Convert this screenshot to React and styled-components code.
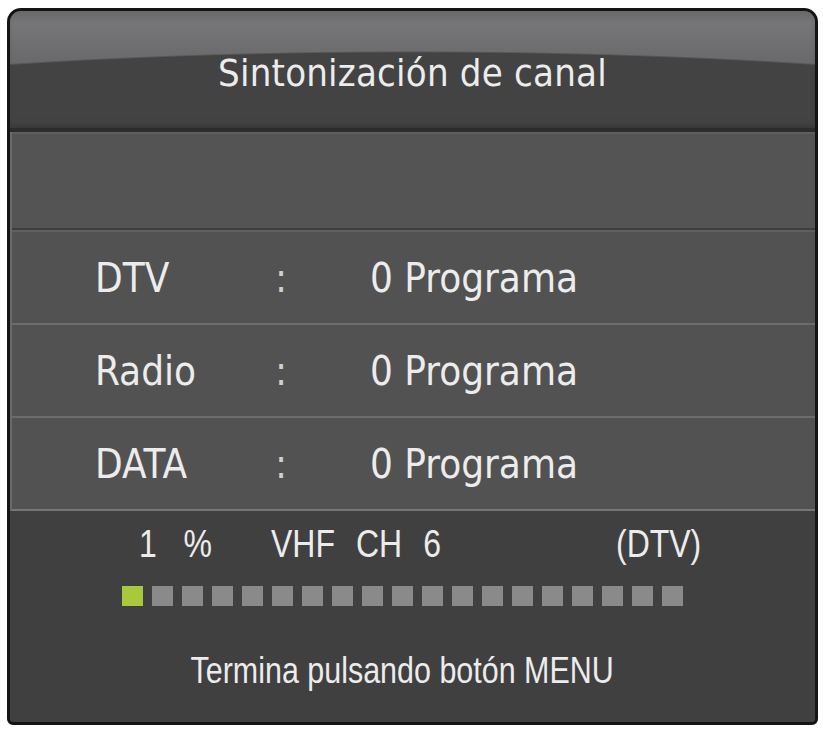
import React from 'react';
import styled, { createGlobalStyle } from 'styled-components';

const GlobalStyle = createGlobalStyle`
  html, body {
    margin: 0;
    padding: 0;
    background: #ffffff;
  }
`

const Page = styled.div`
  padding: 8px 5px 4px 7px;
`

const Frame = styled.div`
  width: 811px;
  height: 717px;
  box-sizing: border-box;
  border: 3px solid #141414;
  border-radius: 14px 14px 6px 6px;
  overflow: hidden;
  display: flex;
  flex-direction: column;
  background: #404040;
  color: #ececec;
  font-family: "DejaVu Sans Condensed", "DejaVu Sans", sans-serif;
  font-stretch: condensed;
`

const Header = styled.div`
  height: 121px;
  flex: none;
  display: flex;
  align-items: center;
  justify-content: center;
  padding-top: 6px;
  box-sizing: border-box;
  background:
    radial-gradient(900px 118px at 50% 158px, #434343 98.5%, transparent 100%),
    linear-gradient(#68686a 0px, #767678 12px, #6d6d6f 40px, #666668 62px);
  border-bottom: 4px solid #2c2c2c;
  box-shadow: inset 0 -6px 6px -4px #363636;
`

const Title = styled.div`
  font-size: 38px;
  letter-spacing: 0.2px;
`

const Body = styled.div`
  display: flex;
  flex-direction: column;
  border-left: 2px solid #6a6a6a;
`

const Blank = styled.div`
  height: 94px;
  background: #545454;
  border-top: 2px solid #5f5f5f;
  border-bottom: 2px solid #3e3e3e;
`

const Row = styled.div`
  height: 91px;
  display: grid;
  grid-template-columns: 180px 95px 1fr;
  align-items: center;
  padding-left: 83px;
  font-size: 40px;
  background: #525252;
  border-top: 2px solid ${props => props.first ? '#606060' : '#6c6c6c'};
  &:last-child {
    border-bottom: 2px solid #767676;
  }
`

const Colon = styled.span`
  color: #cfcfcf;
`

const Footer = styled.div`
  flex: 1;
  display: flex;
  flex-direction: column;
  align-items: center;
  font-family: "Liberation Sans", Arial, sans-serif;
`

// the OSD uses a narrow face; squeeze Liberation Sans to its width
const Narrow = styled.span`
  display: inline-block;
  white-space: pre;
  word-spacing: ${props => props.spread || 0}px;
  transform: scaleX(${props => props.squeeze || 0.82});
  transform-origin: ${props => props.centered ? 'center' : 'left'} center;
`

const Status = styled.div`
  width: 100%;
  display: flex;
  align-items: center;
  height: 66px;
  padding-left: 129px;
  box-sizing: border-box;
  font-size: 39px;
`

const Field = styled.span`
  flex: none;
  width: ${props => props.w}px;
`

const Bar = styled.div`
  display: flex;
  gap: 9px;
  margin-top: 9px;
  margin-left: -20px;
`

const Cell = styled.div`
  width: 21px;
  height: 20px;
  background: ${props => props.on ? '#a9c83c' : '#8a8a8a'};
`

const Hint = styled.div`
  margin-top: 44px;
  margin-left: -20px;
  font-size: 36px;
`

const rows = [
  { name: 'DTV', count: 0 },
  { name: 'Radio', count: 0 },
  { name: 'DATA', count: 0 },
]

const App = () => {
  const progress = 1
  const cells = Array.from({ length: 19 }, (_, i) => i < progress)

  return (
    <Page>
      <GlobalStyle />
      <Frame>
        <Header>
          <Title>Sintonización de canal</Title>
        </Header>
        <Body>
          <Blank />
          {rows.map((r, i) => (
            <Row key={r.name} first={i === 0}>
              <span>{r.name}</span>
              <Colon>:</Colon>
              <span>{r.count} Programa</span>
            </Row>
          ))}
        </Body>
        <Footer>
          <Status>
            <Field w={132}><Narrow>{progress}   %</Narrow></Field>
            <Field w={345}><Narrow spread={2}>VHF  CH  6</Narrow></Field>
            <Field w={120}><Narrow>(DTV)</Narrow></Field>
          </Status>
          <Bar>
            {cells.map((on, i) => <Cell key={i} on={on} />)}
          </Bar>
          <Hint>
            <Narrow centered squeeze={0.846}>Termina pulsando botón MENU</Narrow>
          </Hint>
        </Footer>
      </Frame>
    </Page>
  )
}

export default App;
